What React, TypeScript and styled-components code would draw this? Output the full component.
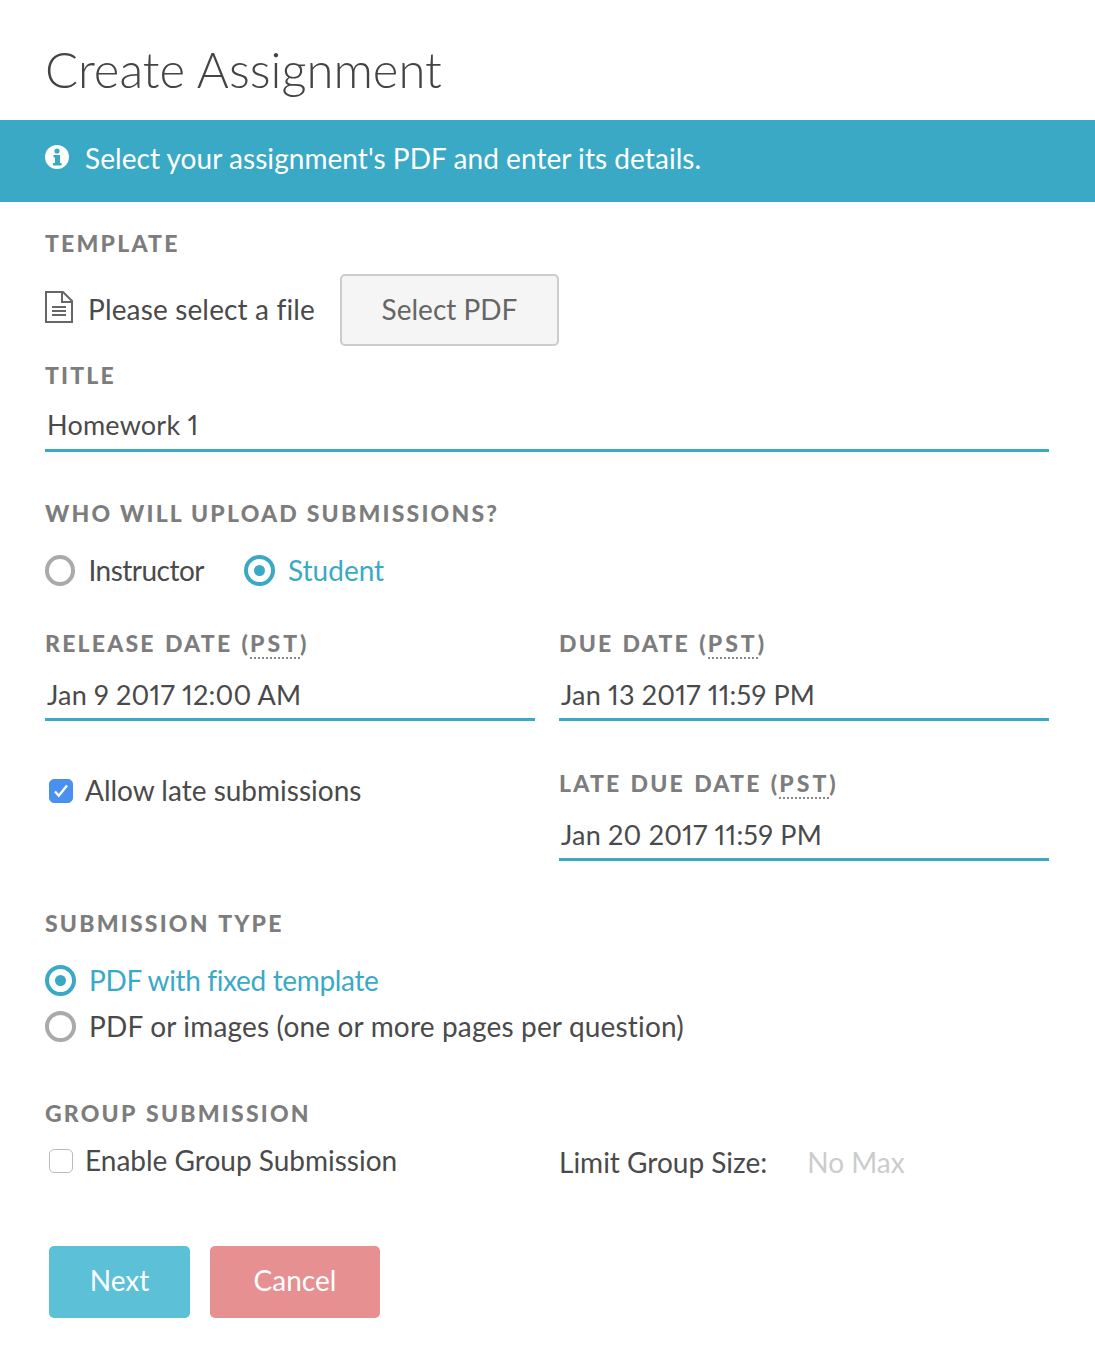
import styled, { createGlobalStyle } from 'styled-components';

const GlobalStyle = createGlobalStyle`
  body {
    margin: 0;
    background: #fff;
    font-family: Lato, "Liberation Sans", sans-serif;
    font-variant-ligatures: none;
    font-variant-numeric: proportional-nums;
    color: #4a4a4a;
  }
`;

function FileIcon() {
  return (
    <FileGlyph width='28' height='32' viewBox='0 0 28 32' fill='none' stroke='#666' strokeWidth='2'>
      <path d='M1 1h17l9 9v21H1z' />
      <path d='M17 1v10h10' />
      <path d='M7 16h14M7 20h14M7 24h14' />
    </FileGlyph>
  );
}

function InfoIcon() {
  return (
    <InfoGlyph width='24' height='24' viewBox='0 0 24 24'>
      <circle cx='12' cy='12' r='12' fill='#fff' />
      <circle cx='12' cy='6' r='2.6' fill='#3aa9c6' />
      <path d='M8.5 10h6.5v8h1.6v2.6H8v-2.6h2v-5.4H8.5z' fill='#3aa9c6' />
    </InfoGlyph>
  );
}

function Check() {
  return (
    <svg width='18' height='18' viewBox='0 0 18 18' fill='none' stroke='#fff' strokeWidth='2.4'>
      <path d='M3 9.5l3.8 4.2L15 3.5' />
    </svg>
  );
}

function Pst() {
  return (
    <>
      (<PstAbbr>PST</PstAbbr>)
    </>
  );
}

export default function App() {
  return (
    <Page>
      <GlobalStyle />
      <Title>Create Assignment</Title>
      <Banner>
        <InfoIcon />
        <span>Select your assignment's PDF and enter its details.</span>
      </Banner>
      <Form>
        <Label>TEMPLATE</Label>
        <FileRow>
          <FileIcon />
          <FileName>Please select a file</FileName>
          <SelectButton>Select PDF</SelectButton>
        </FileRow>
        <Label $top={17}>TITLE</Label>
        <Field $top={21} $pad={8}>
          Homework 1
        </Field>

        <Label $top={49} $tight>
          WHO WILL UPLOAD SUBMISSIONS?
        </Label>
        <RadioRow>
          <RadioItem>
            <Radio />
            <RadioText $spacing={-0.5}>Instructor</RadioText>
          </RadioItem>
          <RadioItem $active>
            <Radio $active />
            <RadioText>Student</RadioText>
          </RadioItem>
        </RadioRow>

        <TwoCols $top={45}>
          <div>
            <Label>
              RELEASE DATE <Pst />
            </Label>
            <Field $top={23}>Jan 9 2017 12:00 AM</Field>
          </div>
          <div>
            <Label>
              DUE DATE <Pst />
            </Label>
            <Field $top={23}>Jan 13 2017 11:59 PM</Field>
          </div>
        </TwoCols>

        <TwoCols $top={50}>
          <CheckRow $top={3}>
            <CheckBox $checked>
              <Check />
            </CheckBox>
            <span>Allow late submissions</span>
          </CheckRow>
          <div>
            <Label>
              LATE DUE DATE <Pst />
            </Label>
            <Field $top={23}>Jan 20 2017 11:59 PM</Field>
          </div>
        </TwoCols>

        <Label $top={50}>SUBMISSION TYPE</Label>
        <RadioStack>
          <RadioItem $active>
            <Radio $active />
            <RadioText $spacing={-0.35}>PDF with fixed template</RadioText>
          </RadioItem>
          <RadioItem>
            <Radio />
            <RadioText $spacing={0.17}>PDF or images (one or more pages per question)</RadioText>
          </RadioItem>
        </RadioStack>

        <Label $top={59}>GROUP SUBMISSION</Label>
        <TwoCols $top={19}>
          <CheckRow>
            <CheckBox />
            <span>Enable Group Submission</span>
          </CheckRow>
          <LimitRow>
            <span>Limit Group Size:</span>
            <NoMax>No Max</NoMax>
          </LimitRow>
        </TwoCols>

        <Actions>
          <ActionButton $color='#5cc0d6'>Next</ActionButton>
          <ActionButton $color='#e69092' $wide>
            Cancel
          </ActionButton>
        </Actions>
      </Form>
    </Page>
  );
}

const Page = styled.div`
  width: 1095px;
  height: 1370px;
  overflow: hidden;
  background: #fff;
`;

const Title = styled.h1`
  margin: 0;
  height: 120px;
  padding: 40px 0 0 45px;
  box-sizing: border-box;
  font-size: 49px;
  line-height: 58px;
  font-weight: 300;
  color: #444;
`;

const Banner = styled.div`
  display: flex;
  align-items: center;
  gap: 16px;
  height: 82px;
  padding: 0 0 7px 45px;
  box-sizing: border-box;
  background: #3aa9c6;
  color: #fff;
  font-size: 28px;
  letter-spacing: 0.05px;
`;

const InfoGlyph = styled.svg`
  margin-bottom: 2px;
`;

const Form = styled.div`
  padding: 29px 46px 0 45px;
`;

const Label = styled.div<{ $top?: number; $tight?: boolean }>`
  margin-top: ${(p) => p.$top ?? 0}px;
  font-size: 23px;
  line-height: 24px;
  font-weight: 900;
  letter-spacing: 2.2px;
  word-spacing: ${(p) => (p.$tight ? 0 : 1.5)}px;
  color: #7d7d7d;
`;

const PstAbbr = styled.span`
  border-bottom: 2px dotted #888;
  letter-spacing: 3px;
`;

const FileRow = styled.div`
  display: flex;
  align-items: center;
  margin-top: 19px;
  font-size: 28px;
`;

const FileGlyph = styled.svg`
  margin-top: -7px;
`;

const FileName = styled.span`
  margin: 0 25px 3px 15px;
  letter-spacing: 0.15px;
`;

const SelectButton = styled.button`
  width: 219px;
  height: 72px;
  padding-bottom: 4px;
  border: 2px solid #ccc;
  border-radius: 5px;
  background: #f5f5f5;
  color: #666;
  font: inherit;
`;

const Field = styled.div<{ $top?: number; $pad?: number }>`
  margin-top: ${(p) => p.$top ?? 0}px;
  padding: 0 0 ${(p) => p.$pad ?? 7}px 2px;
  border-bottom: 3px solid #3aa9c6;
  font-size: 27px;
  line-height: 33px;
  letter-spacing: 0.2px;
  color: #4a4a4a;
`;

const RadioRow = styled.div`
  display: grid;
  grid-template-columns: 159px auto;
  justify-content: start;
  column-gap: 40px;
  margin-top: 29px;
`;

const RadioStack = styled.div`
  display: flex;
  flex-direction: column;
  gap: 14px;
  margin-top: 29px;
`;

const RadioItem = styled.label<{ $active?: boolean }>`
  display: flex;
  align-items: center;
  gap: 13px;
  font-size: 28px;
  line-height: 32px;
  color: ${(p) => (p.$active ? '#3aa9c6' : '#4a4a4a')};
`;

const RadioText = styled.span<{ $spacing?: number }>`
  letter-spacing: ${(p) => p.$spacing ?? 0}px;
`;

const Radio = styled.span<{ $active?: boolean }>`
  position: relative;
  width: 31px;
  height: 31px;
  box-sizing: border-box;
  border-radius: 50%;
  border: 4px solid ${(p) => (p.$active ? '#3aa9c6' : '#aaa')};
  &::after {
    content: '';
    display: ${(p) => (p.$active ? 'block' : 'none')};
    position: absolute;
    inset: 6px;
    border-radius: 50%;
    background: #3aa9c6;
  }
`;

const TwoCols = styled.div<{ $top?: number }>`
  display: grid;
  grid-template-columns: 490px 490px;
  column-gap: 24px;
  margin-top: ${(p) => p.$top ?? 0}px;
`;

const CheckRow = styled.label<{ $top?: number }>`
  display: flex;
  align-items: center;
  align-self: start;
  gap: 12px;
  margin-top: ${(p) => p.$top ?? 0}px;
  padding-left: 4px;
  font-size: 28px;
  line-height: 32px;
`;

const CheckBox = styled.span<{ $checked?: boolean }>`
  display: flex;
  align-items: center;
  justify-content: center;
  width: 24px;
  height: 24px;
  margin-top: 2px;
  box-sizing: border-box;
  border-radius: 5px;
  border: 1px solid ${(p) => (p.$checked ? '#4a90f0' : '#bbb')};
  background: ${(p) => (p.$checked ? '#4a90f0' : '#fff')};
`;

const LimitRow = styled.div`
  display: flex;
  gap: 40px;
  font-size: 28px;
  line-height: 36px;
`;

const NoMax = styled.span`
  color: #ccc;
`;

const Actions = styled.div`
  display: flex;
  gap: 20px;
  margin: 66px 0 0 4px;
`;

const ActionButton = styled.button<{ $color: string; $wide?: boolean }>`
  width: ${(p) => (p.$wide ? 170 : 141)}px;
  height: 72px;
  padding-bottom: 5px;
  border: 0;
  border-radius: 5px;
  background: ${(p) => p.$color};
  color: #fff;
  font: inherit;
  font-size: 28px;
`;
